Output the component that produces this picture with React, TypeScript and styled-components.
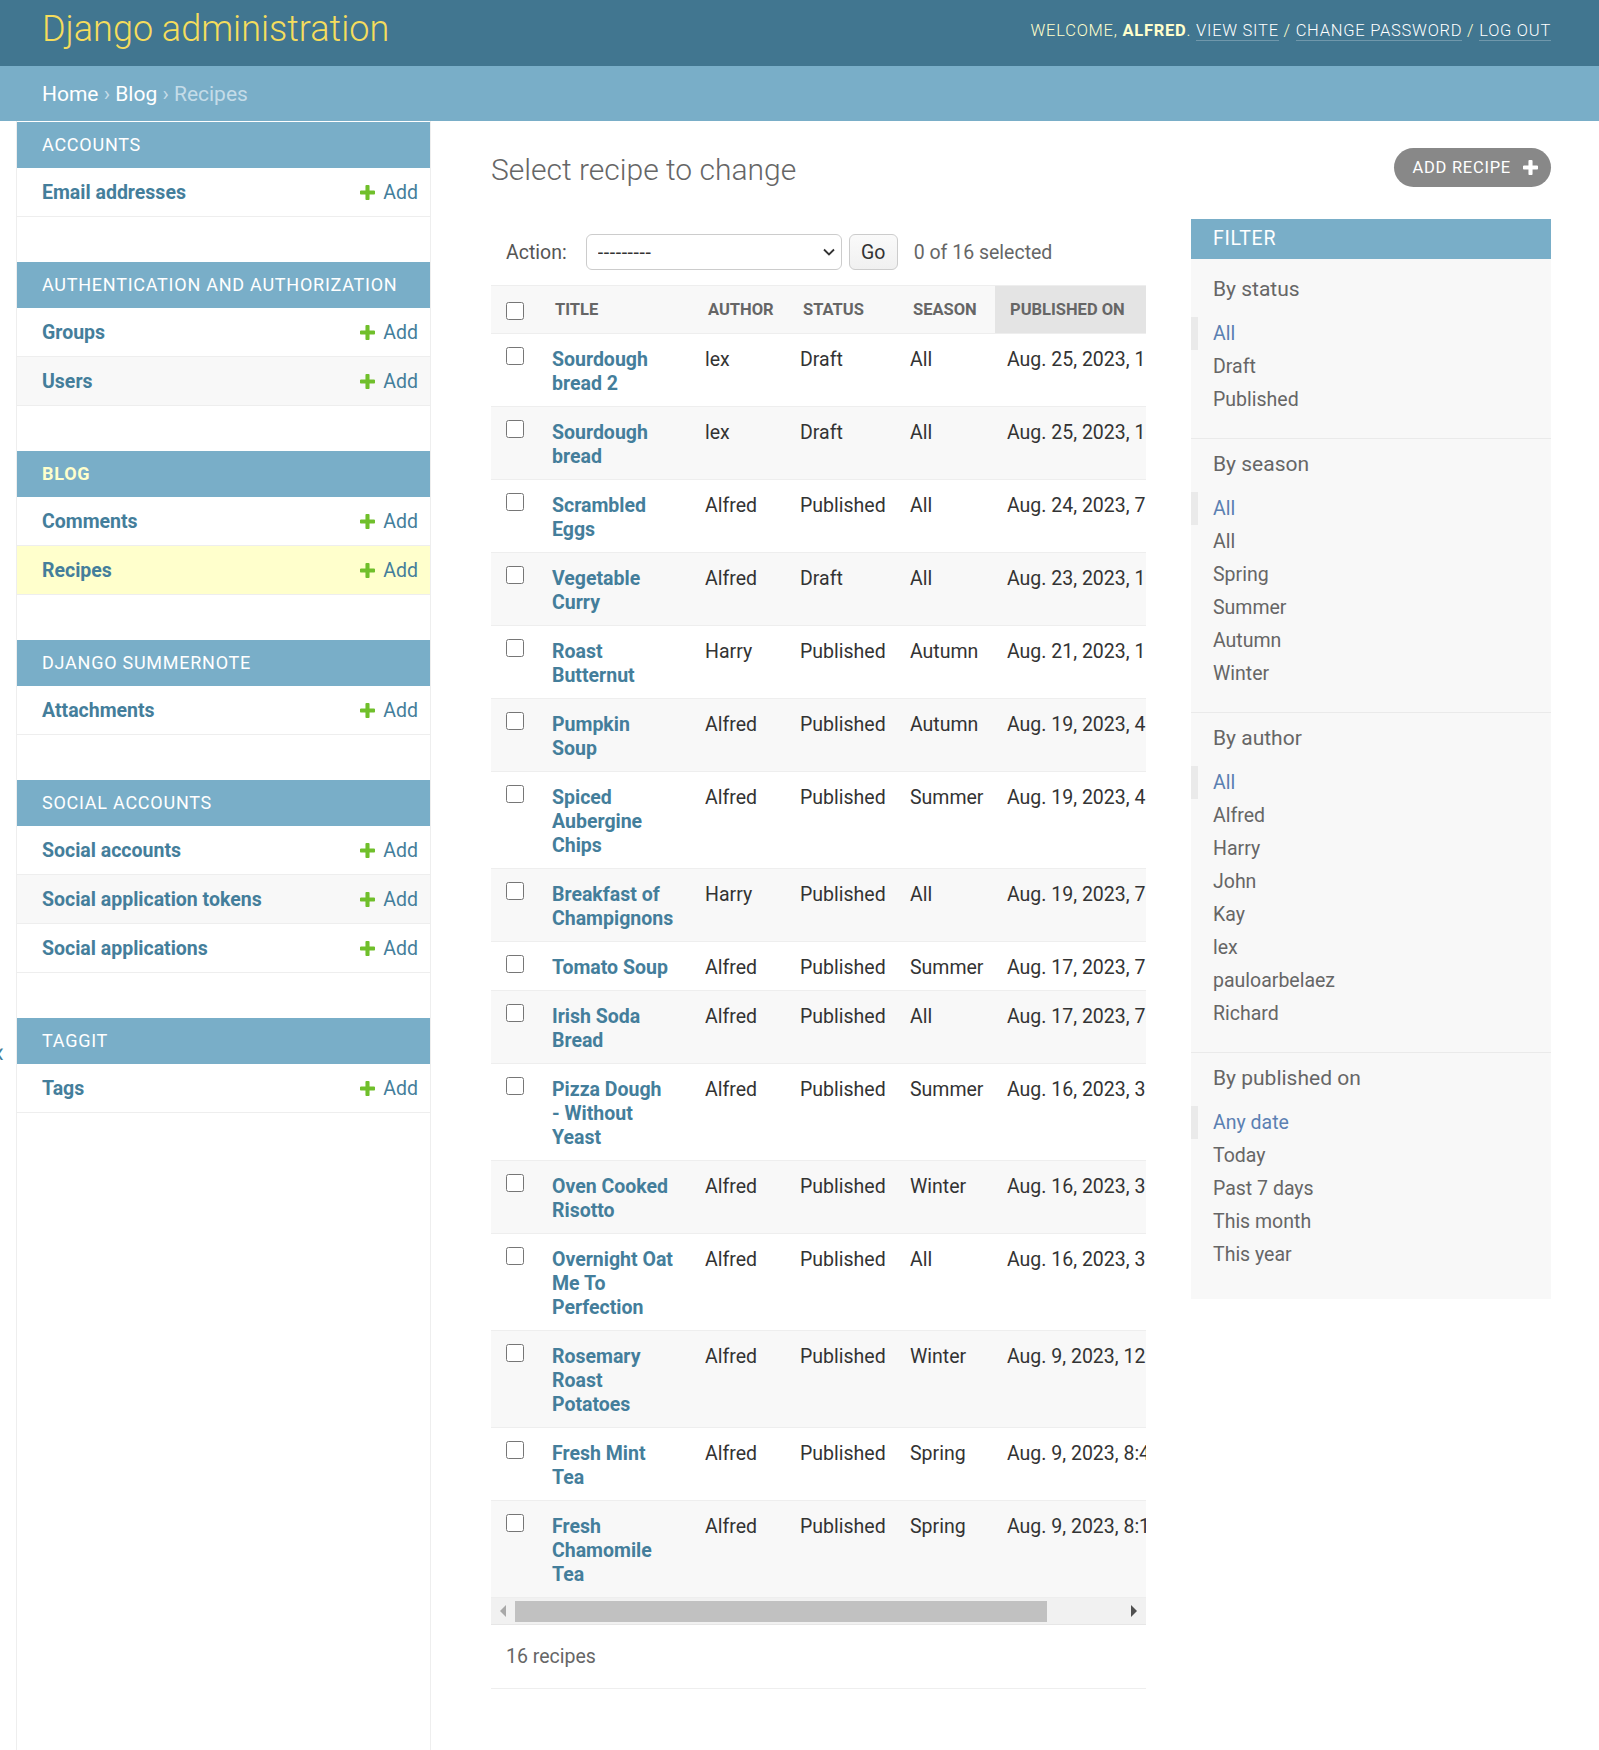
import React from "react";
import styled, { createGlobalStyle } from "styled-components";

const GlobalStyle = createGlobalStyle`
  html, body {
    margin: 0;
    padding: 0;
  }
  html {
    overflow: hidden;
  }
  body {
    font-family: Roboto, "Liberation Sans", Arial, sans-serif;
    color: #333;
    background: #fff;
  }
  * {
    box-sizing: border-box;
  }
`;

const Header = styled.header`
  display: flex;
  justify-content: space-between;
  align-items: center;
  height: 66px;
  padding: 0 48px 0 42px;
  background: #417690;
  color: #ffc;
`;

const Branding = styled.h1`
  margin: 0 0 8px;
  font-size: 36px;
  line-height: 36px;
  font-weight: 300;
  color: #f5dd5d;
`;

const UserTools = styled.div`
  margin-bottom: 4px;
  font-size: 16.5px;
  line-height: 24px;
  font-weight: 300;
  letter-spacing: 0.75px;
  text-transform: uppercase;

  strong {
    font-weight: 700;
  }

  a {
    color: #fff;
    text-decoration: none;
    border-bottom: 1px solid rgba(255, 255, 255, 0.25);
  }
`;

const Breadcrumbs = styled.nav`
  display: flex;
  align-items: center;
  height: 55px;
  padding: 0 42px;
  background: #79aec8;
  color: #c4dce8;
  font-size: 21px;

  a {
    color: #fff;
    text-decoration: none;
  }
`;

const Main = styled.div`
  display: flex;
  min-height: 1629px;
`;

const SidebarToggle = styled.div`
  flex: 0 0 17px;
  border-right: 1px solid #eee;
  overflow: hidden;
  padding-top: 916px;
  color: #447e9b;
  font-size: 30px;
  line-height: 30px;

  span {
    display: block;
    margin-left: -5px;
  }
`;

const Sidebar = styled.nav`
  flex: 0 0 414px;
  border-right: 1px solid #eee;
  padding-top: 1px;
`;

const Module = styled.div`
  margin-bottom: 45px;
`;

const Caption = styled.div<{ $current?: boolean }>`
  height: 46px;
  line-height: 46px;
  padding-left: 25px;
  background: #79aec8;
  color: ${(p) => (p.$current ? "#ffc" : "#fff")};
  font-weight: ${(p) => (p.$current ? 700 : 400)};
  font-size: 18px;
  letter-spacing: 0.75px;
  text-transform: uppercase;
`;

type Tone = "plain" | "alt" | "selected";

const toneBg: Record<Tone, string> = {
  plain: "#fff",
  alt: "#f8f8f8",
  selected: "#ffc",
};

const ModelRow = styled.div<{ $tone: Tone }>`
  display: flex;
  align-items: center;
  justify-content: space-between;
  height: 49px;
  padding: 0 12px 0 25px;
  border-bottom: 1px solid #eee;
  background: ${(p) => toneBg[p.$tone]};
  font-size: 19.5px;
`;

const ModelLink = styled.a`
  color: #447e9b;
  font-weight: 700;
  text-decoration: none;
`;

const AddLink = styled.a`
  display: flex;
  align-items: center;
  gap: 8px;
  color: #447e9b;
  text-decoration: none;
`;

const Content = styled.main`
  flex: 1;
  min-width: 0;
  padding: 27px 48px 0 60px;
`;

const TitleRow = styled.div`
  display: flex;
  justify-content: space-between;
  align-items: flex-start;
  margin-bottom: 31px;
`;

const PageTitle = styled.h1`
  margin: 4px 0 0;
  font-size: 30px;
  line-height: 36px;
  font-weight: 300;
  color: #666;
`;

const AddButton = styled.a`
  display: flex;
  align-items: center;
  gap: 12px;
  height: 39px;
  padding: 0 13px 0 18px;
  border-radius: 20px;
  background: #888;
  color: #fff;
  font-size: 16.5px;
  letter-spacing: 0.75px;
  text-transform: uppercase;
  text-decoration: none;
`;

const ChangeList = styled.div`
  display: flex;
  align-items: flex-start;
  gap: 45px;
`;

const Results = styled.div`
  flex: 1;
  min-width: 0;
`;

const Actions = styled.div`
  display: flex;
  align-items: center;
  padding: 15px 15px 15px;
  font-size: 19.5px;
  color: #555;
`;

const SelectWrap = styled.div`
  position: relative;
  margin-left: 19px;
`;

const ActionSelect = styled.select`
  appearance: none;
  display: block;
  width: 256px;
  height: 36px;
  border: 1px solid #ccc;
  border-radius: 6px;
  background: #fff;
  padding: 0 30px 0 11px;
  font-family: Roboto, "Liberation Sans", Arial, sans-serif;
  font-size: 19.5px;
  letter-spacing: 0.6px;
  color: #333;
`;

const Chevron = styled.svg`
  position: absolute;
  right: 7px;
  top: 14px;
  pointer-events: none;
`;

const GoButton = styled.button`
  width: 49px;
  height: 36px;
  margin-left: 7px;
  border: 1px solid #ccc;
  border-radius: 6px;
  background: linear-gradient(#fafafa, #f0f0f0);
  font-family: Roboto, "Liberation Sans", Arial, sans-serif;
  font-size: 19.5px;
  color: #333;
  padding: 0;
`;

const Counter = styled.span`
  margin-left: 16px;
  color: #666;
`;

const Scroller = styled.div`
  overflow: hidden;
`;

const ResultTable = styled.table`
  width: 764px;
  table-layout: fixed;
  border-collapse: separate;
  border-spacing: 0;
  font-size: 19.5px;

  th:nth-child(1) { width: 49px; }
  th:nth-child(2) { width: 153px; }
  th:nth-child(3) { width: 95px; }
  th:nth-child(4) { width: 110px; }
  th:nth-child(5) { width: 97px; }
  th:nth-child(6) { width: 260px; }

  tbody tr:nth-child(even) td {
    background: #f8f8f8;
  }
`;

const HeadCell = styled.th<{ $sorted?: boolean }>`
  padding: 12px 12px 11px 15px;
  line-height: 24px;
  border-top: 1px solid #eee;
  border-bottom: 1px solid #eee;
  background: ${(p) => (p.$sorted ? "#e4e4e4" : "#f8f8f8")};
  color: #666;
  font-size: 16.5px;
  font-weight: 700;
  text-align: left;
  text-transform: uppercase;
  white-space: nowrap;
  vertical-align: middle;
  overflow: hidden;
`;

const Cell = styled.td<{ $wide?: boolean; $check?: boolean; $nowrap?: boolean }>`
  padding: 14px ${(p) => (p.$wide ? "16px" : "12px")} 10px
    ${(p) => (p.$check ? "15px" : "12px")};
  line-height: 24px;
  border-bottom: 1px solid #eee;
  background: #fff;
  color: #333;
  vertical-align: top;
  white-space: ${(p) => (p.$nowrap ? "nowrap" : "normal")};
  overflow: hidden;
`;

const Check = styled.input<{ $inRow?: boolean }>`
  display: block;
  width: 18px;
  height: 18px;
  margin: ${(p) => (p.$inRow ? "-1px 0 0" : "1px 0 0")};
`;

const RecipeLink = styled.a`
  color: #447e9b;
  font-weight: 700;
  text-decoration: none;
`;

const ScrollTrack = styled.div`
  display: flex;
  align-items: center;
  height: 27px;
  background: #f1f1f1;
  border-bottom: 1px solid #e6e6e6;
`;

const ScrollArrow = styled.div<{ $dir: "left" | "right" }>`
  flex: 0 0 24px;
  display: flex;
  justify-content: center;

  &::before {
    content: "";
    border-top: 6px solid transparent;
    border-bottom: 6px solid transparent;
    ${(p) =>
      p.$dir === "left"
        ? "border-right: 6px solid #a8a8a8;"
        : "border-left: 6px solid #505050;"}
  }
`;

const ScrollThumb = styled.div`
  flex: 0 0 532px;
  height: 21px;
  background: #c1c1c1;
`;

const ScrollSpacer = styled.div`
  flex: 1;
`;

const Paginator = styled.p`
  margin: 0;
  height: 64px;
  line-height: 63px;
  padding: 0 15px;
  border-bottom: 1px solid #eee;
  color: #666;
  font-size: 19.5px;
`;

const FilterPanel = styled.div`
  flex: 0 0 360px;
  background: #f8f8f8;
`;

const FilterTitle = styled.h2`
  margin: 0;
  height: 40px;
  line-height: 40px;
  padding: 0 22px;
  background: #79aec8;
  color: #fff;
  font-size: 19.5px;
  font-weight: 400;
  letter-spacing: 0.75px;
  text-transform: uppercase;
`;

const FilterGroup = styled.div`
  padding: 13px 0 22px;
  border-bottom: 1px solid #eaeaea;

  &:first-of-type {
    padding-top: 18px;
  }

  &:last-of-type {
    border-bottom: none;
    padding-bottom: 28px;
  }
`;

const GroupTitle = styled.h3`
  margin: 0 0 16px;
  padding: 0 22px;
  font-size: 21px;
  line-height: 24px;
  font-weight: 400;
  color: #666;
`;

const FilterList = styled.ul`
  margin: 0;
  padding: 0;
  list-style: none;
`;

const FilterItem = styled.li<{ $selected?: boolean }>`
  line-height: 33px;
  padding-left: 15px;
  border-left: 7px solid ${(p) => (p.$selected ? "#eaeaea" : "transparent")};
  font-size: 19.5px;

  a {
    color: ${(p) => (p.$selected ? "#5b80b2" : "#666")};
    text-decoration: none;
  }
`;

function PlusIcon({ color, size = 15 }: { color: string; size?: number }) {
  return (
    <svg width={size} height={size} viewBox="192 128 1408 1408">
      <path
        fill={color}
        d="M1600 736v192q0 40-28 68t-68 28h-416v416q0 40-28 68t-68 28h-192q-40 0-68-28t-28-68v-416h-416q-40 0-68-28t-28-68v-192q0-40 28-68t68-28h416v-416q0-40 28-68t68-28h192q40 0 68 28t28 68v416h416q40 0 68 28t28 68z"
      />
    </svg>
  );
}

type AppModule = {
  name: string;
  current?: boolean;
  models: { name: string; selected?: boolean }[];
};

const modules: AppModule[] = [
  { name: "Accounts", models: [{ name: "Email addresses" }] },
  {
    name: "Authentication and Authorization",
    models: [{ name: "Groups" }, { name: "Users" }],
  },
  {
    name: "Blog",
    current: true,
    models: [{ name: "Comments" }, { name: "Recipes", selected: true }],
  },
  { name: "Django Summernote", models: [{ name: "Attachments" }] },
  {
    name: "Social Accounts",
    models: [
      { name: "Social accounts" },
      { name: "Social application tokens" },
      { name: "Social applications" },
    ],
  },
  { name: "Taggit", models: [{ name: "Tags" }] },
];

type Recipe = {
  title: string;
  author: string;
  status: string;
  season: string;
  published: string;
};

const recipes: Recipe[] = [
  { title: "Sourdough bread 2", author: "lex", status: "Draft", season: "All", published: "Aug. 25, 2023, 1:45 p.m." },
  { title: "Sourdough bread", author: "lex", status: "Draft", season: "All", published: "Aug. 25, 2023, 1:12 p.m." },
  { title: "Scrambled Eggs", author: "Alfred", status: "Published", season: "All", published: "Aug. 24, 2023, 7:30 p.m." },
  { title: "Vegetable Curry", author: "Alfred", status: "Draft", season: "All", published: "Aug. 23, 2023, 1:05 p.m." },
  { title: "Roast Butternut", author: "Harry", status: "Published", season: "Autumn", published: "Aug. 21, 2023, 1:20 p.m." },
  { title: "Pumpkin Soup", author: "Alfred", status: "Published", season: "Autumn", published: "Aug. 19, 2023, 4:10 p.m." },
  { title: "Spiced Aubergine Chips", author: "Alfred", status: "Published", season: "Summer", published: "Aug. 19, 2023, 4:02 p.m." },
  { title: "Breakfast of Champignons", author: "Harry", status: "Published", season: "All", published: "Aug. 19, 2023, 7:15 a.m." },
  { title: "Tomato Soup", author: "Alfred", status: "Published", season: "Summer", published: "Aug. 17, 2023, 7:40 p.m." },
  { title: "Irish Soda Bread", author: "Alfred", status: "Published", season: "All", published: "Aug. 17, 2023, 7:22 p.m." },
  { title: "Pizza Dough -\u2060\u00a0Without Yeast", author: "Alfred", status: "Published", season: "Summer", published: "Aug. 16, 2023, 3:50 p.m." },
  { title: "Oven Cooked Risotto", author: "Alfred", status: "Published", season: "Winter", published: "Aug. 16, 2023, 3:33 p.m." },
  { title: "Overnight Oat Me To Perfection", author: "Alfred", status: "Published", season: "All", published: "Aug. 16, 2023, 3:11 p.m." },
  { title: "Rosemary Roast Potatoes", author: "Alfred", status: "Published", season: "Winter", published: "Aug. 9, 2023, 12:40 p.m." },
  { title: "Fresh Mint Tea", author: "Alfred", status: "Published", season: "Spring", published: "Aug. 9, 2023, 8:47 p.m." },
  { title: "Fresh Chamomile Tea", author: "Alfred", status: "Published", season: "Spring", published: "Aug. 9, 2023, 8:15 p.m." },
];

const filters: { title: string; options: string[] }[] = [
  { title: "By status", options: ["All", "Draft", "Published"] },
  { title: "By season", options: ["All", "All", "Spring", "Summer", "Autumn", "Winter"] },
  {
    title: "By author",
    options: ["All", "Alfred", "Harry", "John", "Kay", "lex", "pauloarbelaez", "Richard"],
  },
  {
    title: "By published on",
    options: ["Any date", "Today", "Past 7 days", "This month", "This year"],
  },
];

function App() {
  return (
    <>
      <GlobalStyle />
      <Header>
        <Branding>Django administration</Branding>
        <UserTools>
          Welcome, <strong>Alfred</strong>. <a href="#">View site</a> /{" "}
          <a href="#">Change password</a> / <a href="#">Log out</a>
        </UserTools>
      </Header>
      <Breadcrumbs>
        <a href="#">Home</a>&nbsp;›&nbsp;<a href="#">Blog</a>&nbsp;›&nbsp;Recipes
      </Breadcrumbs>
      <Main>
        <SidebarToggle>
          <span>‹</span>
        </SidebarToggle>
        <Sidebar>
          {modules.map((mod) => (
            <Module key={mod.name}>
              <Caption $current={mod.current}>{mod.name}</Caption>
              {mod.models.map((model, i) => (
                <ModelRow
                  key={model.name}
                  $tone={model.selected ? "selected" : i % 2 === 1 ? "alt" : "plain"}
                >
                  <ModelLink href="#">{model.name}</ModelLink>
                  <AddLink href="#">
                    <PlusIcon color="#70bf2b" />
                    Add
                  </AddLink>
                </ModelRow>
              ))}
            </Module>
          ))}
        </Sidebar>
        <Content>
          <TitleRow>
            <PageTitle>Select recipe to change</PageTitle>
            <AddButton href="#">
              Add recipe
              <PlusIcon color="#fff" />
            </AddButton>
          </TitleRow>
          <ChangeList>
            <Results>
              <Actions>
                <label>Action:</label>
                <SelectWrap>
                  <ActionSelect defaultValue="">
                    <option value="">---------</option>
                    <option value="delete">Delete selected recipes</option>
                  </ActionSelect>
                  <Chevron width="12" height="8" viewBox="0 0 12 8">
                    <path d="M1 1.5l5 5 5-5" fill="none" stroke="#333" strokeWidth="1.8" />
                  </Chevron>
                </SelectWrap>
                <GoButton>Go</GoButton>
                <Counter>0 of 16 selected</Counter>
              </Actions>
              <Scroller>
                <ResultTable>
                  <thead>
                    <tr>
                      <HeadCell>
                        <Check type="checkbox" />
                      </HeadCell>
                      <HeadCell>Title</HeadCell>
                      <HeadCell>Author</HeadCell>
                      <HeadCell>Status</HeadCell>
                      <HeadCell>Season</HeadCell>
                      <HeadCell $sorted>Published on</HeadCell>
                    </tr>
                  </thead>
                  <tbody>
                    {recipes.map((r) => (
                      <tr key={r.title}>
                        <Cell $check>
                          <Check type="checkbox" $inRow />
                        </Cell>
                        <Cell $wide>
                          <RecipeLink href="#">{r.title}</RecipeLink>
                        </Cell>
                        <Cell>{r.author}</Cell>
                        <Cell>{r.status}</Cell>
                        <Cell>{r.season}</Cell>
                        <Cell $nowrap>{r.published}</Cell>
                      </tr>
                    ))}
                  </tbody>
                </ResultTable>
              </Scroller>
              <ScrollTrack>
                <ScrollArrow $dir="left" />
                <ScrollThumb />
                <ScrollSpacer />
                <ScrollArrow $dir="right" />
              </ScrollTrack>
              <Paginator>16 recipes</Paginator>
            </Results>
            <FilterPanel>
              <FilterTitle>Filter</FilterTitle>
              {filters.map((group) => (
                <FilterGroup key={group.title}>
                  <GroupTitle>{group.title}</GroupTitle>
                  <FilterList>
                    {group.options.map((opt, i) => (
                      <FilterItem key={opt + i} $selected={i === 0}>
                        <a href="#">{opt}</a>
                      </FilterItem>
                    ))}
                  </FilterList>
                </FilterGroup>
              ))}
            </FilterPanel>
          </ChangeList>
        </Content>
      </Main>
    </>
  );
}

export default App;
